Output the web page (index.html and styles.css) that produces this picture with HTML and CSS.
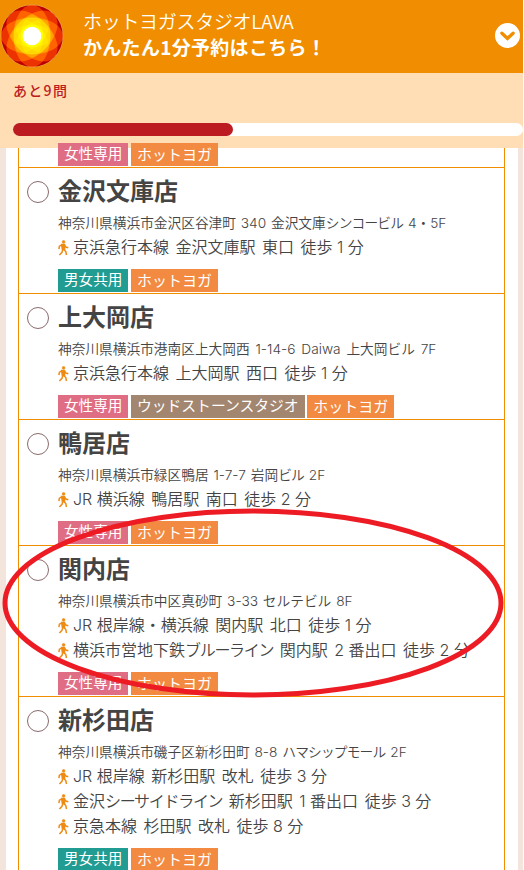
FILE: index.html
```html
<!DOCTYPE html>
<html lang="ja">
  <head>
    <meta charset="UTF-8" />
    <meta name="viewport" content="width=device-width, initial-scale=1.0" />
    <title>ホットヨガスタジオLAVA かんたん1分予約</title>
    <link rel="stylesheet" href="styles.css">
  </head>
  <body>
    <svg class="defs" width="0" height="0">
      <symbol id="walk" viewBox="0 0 11 16">
        <circle cx="5.6" cy="1.9" r="1.4" stroke-width="0.6" />
        <path d="M3.6 4.6 L6.4 4.6 L6.6 9.6 L4.4 9.6 Z" />
        <path fill="none" d="M5.8 9.4 L7.8 11.6 L8.5 15 M4.8 9.4 L4 12.4 L1.4 15 M4 4.9 L1.4 6.2 L0.9 9.2 M6.4 4.9 L7.8 7 L10.3 7.8" />
      </symbol>
    </svg>

    <div class="page">
      <header class="header">
        <svg class="logo" viewBox="-32 -32 64 64">
          <circle r="31.5" fill="#e9a04a" />
          <circle r="30.8" fill="#b90000" />
          <g class="petals">
            <ellipse rx="31" ry="18.5" />
            <ellipse rx="31" ry="18.5" transform="rotate(45)" />
            <ellipse rx="31" ry="18.5" transform="rotate(90)" />
            <ellipse rx="31" ry="18.5" transform="rotate(135)" />
          </g>
          <g class="petals inner">
            <ellipse rx="21" ry="11" />
            <ellipse rx="21" ry="11" transform="rotate(45)" />
            <ellipse rx="21" ry="11" transform="rotate(90)" />
            <ellipse rx="21" ry="11" transform="rotate(135)" />
          </g>
          <circle r="9.3" fill="#fff" />
        </svg>
        <div class="header-text">
          <div class="brand">ホットヨガスタジオLAVA</div>
          <div class="catch">かんたん1分予約はこちら！</div>
        </div>
        <svg class="toggle" viewBox="0 0 25 25">
          <circle cx="12.5" cy="12.5" r="12.5" />
          <path d="M6.9 10.2 L12.5 15.4 L18.1 10.2" />
        </svg>
      </header>

      <div class="progress">
        <div class="remain">あと9問</div>
        <div class="bar"><div class="bar-fill"></div></div>
      </div>

      <main class="list">
        <div class="shop shop-cut">
          <div class="tags"><span class="tag women">女性専用</span><span class="tag hot">ホットヨガ</span></div>
        </div>

        <label class="shop">
          <span class="radio"></span>
          <div class="detail">
            <h2>金沢文庫店</h2>
            <p class="address">神奈川県横浜市金沢区谷津町 340 金沢文庫<span class="kana">シンコービル</span> 4・5F</p>
            <p class="access"><svg><use href="#walk" /></svg>京浜急行本線 金沢文庫駅 東口 <span class="tight">徒歩 1 分</span></p>
            <div class="tags"><span class="tag both">男女共用</span><span class="tag hot">ホットヨガ</span></div>
          </div>
        </label>

        <label class="shop">
          <span class="radio"></span>
          <div class="detail">
            <h2>上大岡店</h2>
            <p class="address wide">神奈川県横浜市港南区上大岡西 1-14-6 Daiwa 上大岡ビル 7F</p>
            <p class="access"><svg><use href="#walk" /></svg>京浜急行本線 上大岡駅 西口 <span class="tight">徒歩 1 分</span></p>
            <div class="tags"><span class="tag women">女性専用</span><span class="tag wood">ウッドストーンスタジオ</span><span class="tag hot">ホットヨガ</span></div>
          </div>
        </label>

        <label class="shop">
          <span class="radio"></span>
          <div class="detail">
            <h2>鴨居店</h2>
            <p class="address">神奈川県横浜市緑区鴨居 1-7-7 岩岡<span class="kana">ビル</span> 2F</p>
            <p class="access"><svg><use href="#walk" /></svg><span class="tight">JR </span>横浜線 鴨居駅 南口 <span class="tight">徒歩 2 分</span></p>
            <div class="tags"><span class="tag women">女性専用</span><span class="tag hot">ホットヨガ</span></div>
          </div>
        </label>

        <label class="shop">
          <span class="radio"></span>
          <div class="detail">
            <h2>関内店</h2>
            <p class="address">神奈川県横浜市中区真砂町 3-33 セルテビル 8F</p>
            <p class="access"><svg><use href="#walk" /></svg><span class="tight">JR </span>根岸線・横浜線 関内駅 北口 <span class="tight">徒歩 1 分</span></p>
            <p class="access"><svg><use href="#walk" /></svg>横浜市営地下鉄<span class="kana">ブルーライン</span> 関内駅 <span class="tight">2 番出口</span> <span class="tight">徒歩 2 分</span></p>
            <div class="tags"><span class="tag women">女性専用</span><span class="tag hot">ホットヨガ</span></div>
          </div>
        </label>

        <label class="shop">
          <span class="radio"></span>
          <div class="detail">
            <h2>新杉田店</h2>
            <p class="address">神奈川県横浜市磯子区新杉田町 8-8 <span class="kana">ハマシップモール</span> 2F</p>
            <p class="access"><svg><use href="#walk" /></svg><span class="tight">JR </span>根岸線 新杉田駅 改札 <span class="tight">徒歩 3 分</span></p>
            <p class="access"><svg><use href="#walk" /></svg>金沢<span class="kana">シーサイドライン</span> 新杉田駅 <span class="tight">1 番出口</span> <span class="tight">徒歩 3 分</span></p>
            <p class="access"><svg><use href="#walk" /></svg>京急本線 杉田駅 改札 <span class="tight">徒歩 8 分</span></p>
            <div class="tags"><span class="tag both">男女共用</span><span class="tag hot">ホットヨガ</span></div>
          </div>
        </label>
      </main>

      <!-- 関内店を囲む赤丸 -->
      <svg class="marker" viewBox="0 0 502 190">
        <ellipse cx="251" cy="95" rx="248" ry="92" />
      </svg>
    </div>
  </body>
</html>
```

FILE: styles.css
```css
* {
  box-sizing: border-box;
}

body {
  margin: 0;
  background-color: #fff;
  color: #444;
  font-family: "Inter", "Noto Sans CJK JP", sans-serif;
}

.defs {
  position: absolute;
}

.page {
  position: relative;
  width: 523px;
  height: 870px;
  overflow: hidden;
  display: flex;
  flex-direction: column;
  background-color: #f3e5db;
}

.header {
  flex: none;
  display: flex;
  align-items: center;
  height: 73px;
  padding: 0 3px 2px 0;
  background-color: #f18d00;
  color: #fff;
}

.logo {
  width: 64px;
  height: 64px;
  isolation: isolate;
}

.petals ellipse {
  fill: rgb(50, 50, 0);
  mix-blend-mode: plus-lighter;
}

.inner ellipse {
  fill: rgb(15, 14, 0);
}

.header-text {
  flex: 1;
  padding: 0 0 4px 19px;
  font-family: "Noto Sans CJK JP", sans-serif;
  font-size: 19px;
  line-height: 26px;
}

.brand {
  font-weight: 350;
  letter-spacing: -0.3px;
}

.catch {
  font-weight: bold;
  letter-spacing: 0.3px;
}

.toggle {
  width: 25px;
  height: 25px;
  fill: #fff;
}

.toggle path {
  fill: none;
  stroke: #f18d00;
  stroke-width: 3.3;
  stroke-linecap: round;
}

.progress {
  flex: none;
  height: 75px;
  padding: 7px 0 0 13px;
  background-color: #ffdeb5;
}

.remain {
  height: 43px;
  font-family: "Noto Sans CJK JP", sans-serif;
  font-size: 14px;
  font-weight: 500;
  line-height: 20px;
  letter-spacing: 1.3px;
  color: #bb1b21;
}

.bar {
  height: 13px;
  border-radius: 7px;
  background-color: #fff;
}

.bar-fill {
  width: 220px;
  height: 13px;
  border-radius: 7px;
  background-color: #bb1b21;
}

.list {
  flex: 1;
  min-height: 0;
  margin: 0 5px 0 6px;
  padding: 0 13px 0 12px;
  background-color: #fff;
}

.shop {
  display: flex;
  padding: 8px 0 1px 8px;
  border: 1px solid #f18d00;
  border-top: none;
}

.shop-cut {
  height: 20px;
  padding: 0 0 1px 39px;
  align-items: flex-end;
}

.radio {
  flex: none;
  width: 22px;
  height: 22px;
  margin: 5px 9px 0 0;
  border: 1px solid #8a6a6c;
  border-radius: 50%;
}

.detail {
  white-space: nowrap;
}

h2 {
  margin: 0 0 7px;
  padding-top: 1px;
  font-size: 24px;
  line-height: 30px;
}

p {
  margin: 0;
  font-weight: 350;
}

.address {
  margin-bottom: 3px;
  font-size: 13.7px;
  line-height: 18px;
  word-spacing: 1px;
}

.address.wide {
  word-spacing: 2px;
}

.access {
  height: 25px;
  font-size: 16px;
  line-height: 25px;
  word-spacing: 2px;
}

.access svg {
  width: 11px;
  height: 16px;
  margin-right: 4px;
  vertical-align: -3px;
  fill: #ee8b14;
  stroke: #ee8b14;
  stroke-width: 1.5;
}

.tight {
  word-spacing: 0;
}

.address .kana {
  letter-spacing: -0.8px;
}

.access .kana {
  letter-spacing: -1.3px;
}

.tags {
  display: flex;
  gap: 2.5px;
  margin-top: 9px;
}

.tag {
  height: 23px;
  padding: 0 6px;
  font-size: 14.6px;
  line-height: 23px;
  color: #fff;
}

.women {
  background-color: #df6e84;
}

.both {
  background-color: #219c92;
}

.hot {
  font-size: 15px;
  background-color: #f28a41;
}

.wood {
  font-size: 14.8px;
  background-color: #a28670;
}

.marker {
  position: absolute;
  left: 2px;
  top: 508px;
  width: 502px;
  height: 190px;
  fill: none;
  stroke: #ed1c24;
  stroke-width: 5;
}
```
